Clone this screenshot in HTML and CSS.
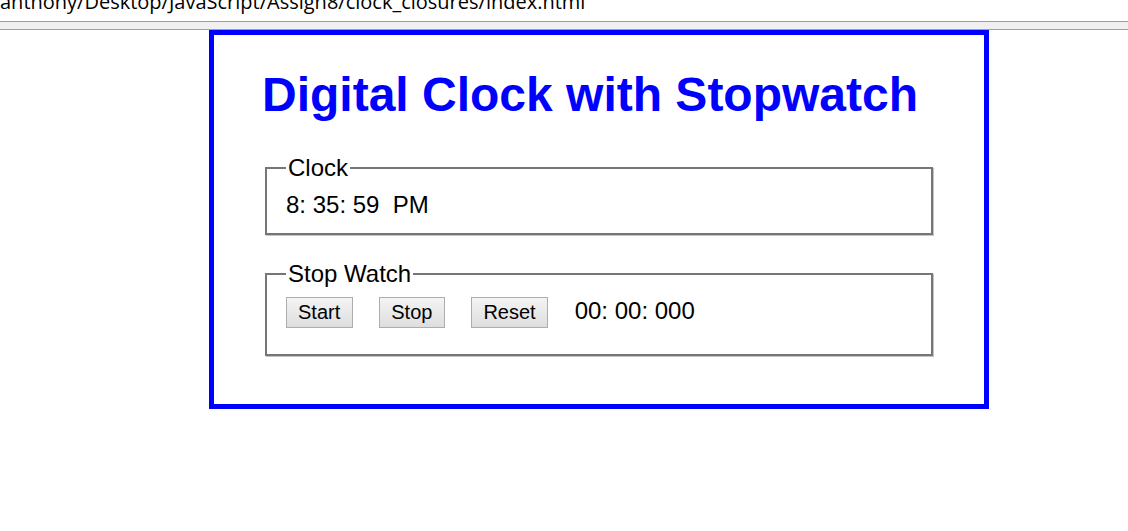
FILE: index.html
```html
<!DOCTYPE html>
<html>
<head>
<meta charset="utf-8">
<title>Digital Clock with Stopwatch</title>
<link rel="stylesheet" href="styles.css">
</head>
<body>
<div class="chrome">
  <div class="url-strip"><div class="url">anthony/Desktop/JavaScript/Assign8/clock_closures/index.html</div></div>
  <div class="bar"></div>
</div>
<div class="clock-box">
  <h1 class="title">Digital Clock with Stopwatch</h1>
  <fieldset class="group">
    <legend class="group-label">Clock</legend>
    <div class="clock-time">8: 35: 59&nbsp; PM</div>
  </fieldset>
  <fieldset class="group group-stopwatch">
    <legend class="group-label">Stop Watch</legend>
    <div class="sw-row">
      <button class="btn" type="button">Start</button>
      <button class="btn" type="button">Stop</button>
      <button class="btn" type="button">Reset</button>
      <span class="sw-time">00: 00: 000</span>
    </div>
  </fieldset>
</div>
</body>
</html>
```

FILE: styles.css
```css
html, body {
  margin: 0;
  padding: 0;
  background: #ffffff;
}

body {
  font-family: "Liberation Sans", Arial, sans-serif;
  font-size: 24px;
  color: #000000;
}

.chrome {
  width: 100%;
}

.url-strip {
  height: 21px;
  overflow: hidden;
}

.url {
  font-family: "Open Sans", "Noto Sans", sans-serif;
  font-size: 20px;
  line-height: 20px;
  margin-top: -8px;
  white-space: nowrap;
  color: #000000;
}

.bar {
  height: 7px;
  background: #f0f0f0;
  border-top: 1px solid #a0a0a0;
  border-bottom: 1px solid #a0a0a0;
}

.clock-box {
  margin-left: 209px;
  width: 672px;
  border: 5px solid #0000ff;
  padding: 0 49px 48px 49px;
}

.title {
  font-family: "Liberation Sans", Arial, sans-serif;
  font-size: 48px;
  font-weight: bold;
  color: #0000ff;
  margin: 32px 0 32px -1px;
  line-height: 55px;
}

.group {
  margin: 0 2px;
  padding: 9px 18px 15px 19px;
  border: 2px solid #767676;
  box-shadow: 1px 1px 0 #c4c4c4;
}

.group-stopwatch {
  margin-top: 25px;
}

.group-label {
  padding: 0 2px;
  font-size: 24px;
  line-height: 27.6px;
}

.clock-time {
  line-height: 27.6px;
}

.sw-row {
  display: flex;
  align-items: baseline;
  gap: 26.5px;
  padding-bottom: 11px;
}

.btn {
  font-family: "Liberation Sans", Arial, sans-serif;
  font-size: 20px;
  line-height: 23px;
  height: 31px;
  padding: 3px 11.5px 3px 11px;
  margin: 0;
  color: #000000;
  border: 1px solid #adadad;
  border-radius: 0;
  background: linear-gradient(#f4f4f4, #dedede);
}

.sw-time {
  line-height: 27.6px;
}
```
